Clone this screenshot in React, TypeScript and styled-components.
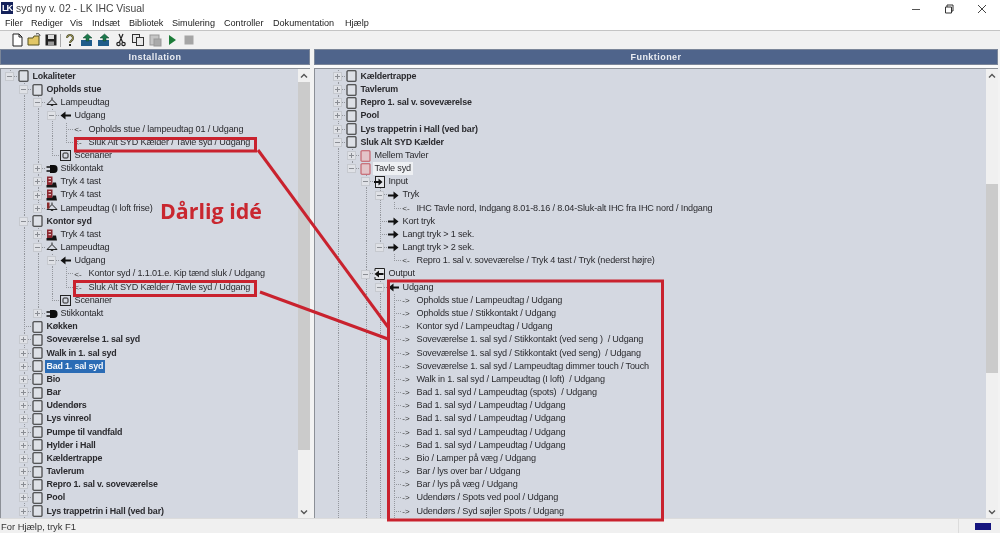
import React from "react";
import styled, { createGlobalStyle } from "styled-components";

const Global = createGlobalStyle`
  html, body { margin: 0; padding: 0; background: #fff; }
  * { box-sizing: border-box; }
`;

const Page = styled.div`
  position: relative;
  width: 1000px;
  height: 533px;
  overflow: hidden;
  display: flex;
  flex-direction: column;
  background: #fff;
  font-family: "Liberation Sans", "Noto Sans", sans-serif;
  color: #2a2a2e;
  filter: blur(0.3px);
`;

const TitleBar = styled.div`
  height: 16px;
  flex: none;
  display: flex;
  align-items: center;
  padding-left: 1px;
  font-size: 10.4px;
  color: #444;
`;
const Logo = styled.div`
  width: 12px;
  height: 12px;
  background: #14215a;
  color: #fff;
  font: bold 9px "Liberation Sans", sans-serif;
  letter-spacing: -1px;
  display: flex;
  align-items: center;
  justify-content: center;
  margin-right: 3px;
`;
const TitleText = styled.div`
  flex: 1;
`;
const WinControls = styled.div`
  display: flex;
  padding-right: 2px;
  margin-top: 1px;
`;
const WinButton = styled.div`
  width: 33px;
  height: 12px;
  display: flex;
  align-items: center;
  justify-content: center;
`;
const MenuBar = styled.div`
  height: 15px;
  flex: none;
  display: flex;
  align-items: center;
  padding-left: 5px;
  font-size: 9.1px;
  color: #222;
  border-bottom: 1px solid #c4c4c4;
`;
const MenuItem = styled.div<{ $w: number }>`
  width: ${(p) => p.$w}px;
`;
const Toolbar = styled.div`
  height: 18px;
  flex: none;
  display: flex;
  align-items: center;
  padding-left: 8px;
  background: #f1f1f1;
`;
const ToolIcon = styled.div`
  width: 17px;
  height: 14px;
  display: flex;
  align-items: center;
  justify-content: center;
`;
const ToolSep = styled.div`
  width: 1px;
  height: 13px;
  margin-left: 1px;
  background: #a8a8a8;
`;
const Panes = styled.div`
  height: 469px;
  flex: none;
  display: flex;
  background: #f3f3f3;
`;
const Pane = styled.div<{ $w: number }>`
  width: ${(p) => p.$w}px;
  display: flex;
  flex-direction: column;
`;
const Splitter = styled.div`
  width: 4px;
`;
const PaneHead = styled.div`
  height: 16px;
  flex: none;
  background: #4f648b;
  border: 1px solid #7b8699;
  color: #e9ecf2;
  font: bold 9px "Liberation Sans", sans-serif;
  letter-spacing: 0.45px;
  display: flex;
  align-items: center;
  justify-content: center;
`;
const PaneGap = styled.div`
  height: 4px;
  flex: none;
  background: #fbfbfb;
  border-bottom: 1px solid #8c9097;
`;
const PaneBody = styled.div`
  height: 449px;
  flex: none;
  display: flex;
  border-left: 1px solid #8c9097;
`;
const Tree = styled.div`
  flex: 1;
  background: #d4d8e1;
  overflow: hidden;
  padding-top: 0.9px;
`;
const Scroll = styled.div`
  width: 12px;
  background: #f0f0f0;
  display: flex;
  flex-direction: column;
  align-items: stretch;
`;
const ScrollBtn = styled.div`
  height: 13px;
  flex: none;
  display: flex;
  align-items: center;
  justify-content: center;
`;
const ScrollTrack = styled.div`
  flex: 1;
  min-height: 0;
`;
const ScrollThumb = styled.div<{ $top: number; $h: number }>`
  margin-top: ${(p) => p.$top}px;
  height: ${(p) => p.$h}px;
  background: #cbcbcb;
`;
const Row = styled.div`
  height: 13.18px;
  display: flex;
  align-items: stretch;
  padding-left: 1.5px;
  font-size: 9.1px;
  white-space: pre;
`;
const LINE = "#94979d";
const dots = `repeating-linear-gradient(to bottom, ${LINE} 0 1px, transparent 1px 2px)`;
const Guide = styled.div<{ $on: boolean }>`
  width: 14px;
  flex: none;
  background: ${(p) => (p.$on ? `${dots} 7px 0 / 1px 100% no-repeat` : "none")};
`;
const Joint = styled.div<{ $down: boolean }>`
  width: 14px;
  flex: none;
  display: flex;
  align-items: center;
  justify-content: center;
  background: ${dots} 7px 0 / 1px ${(p) => (p.$down ? "100%" : "7px")} no-repeat,
    repeating-linear-gradient(to right, ${LINE} 0 1px, transparent 1px 2px) 7px 6px / 7px 1px no-repeat;
`;
const Expander = styled.div`
  width: 9px;
  height: 9px;
  background: #dfe1e6;
  border: 1px solid #c6c9cf;
  display: flex;
  align-items: center;
  justify-content: center;
`;
const IconCell = styled.div`
  width: 14px;
  flex: none;
  display: flex;
  align-items: center;
  justify-content: center;
`;
const Arrow = styled.span`
  font-size: 8px;
  color: #333;
  margin-right: 3px;
`;
const Label = styled.div<{ $bold?: boolean; $sel?: "blue" | "white" }>`
  padding: 0 2px;
  line-height: 13px;
  font-size: ${(p) => (p.$bold ? 8.9 : 9.1)}px;
  letter-spacing: ${(p) => (p.$bold ? -0.17 : -0.16)}px;
  font-weight: ${(p) => (p.$bold ? 700 : 400)};
  background: ${(p) => (p.$sel === "blue" ? "#2b6cb5" : p.$sel === "white" ? "#eef0f3" : "transparent")};
  color: ${(p) => (p.$sel === "blue" ? "#f4f7fb" : "inherit")};
`;
const StatusBar = styled.div`
  flex: 1;
  display: flex;
  align-items: center;
  background: #f0f0f0;
  border-top: 1px solid #dcdcdc;
  padding-left: 1px;
  font-size: 9.4px;
  color: #333;
`;
const StatusText = styled.div`
  flex: 1;
`;
const StatusCell = styled.div`
  width: 42px;
  height: 100%;
  border-left: 1px solid #dcdcdc;
  display: flex;
  align-items: center;
  padding-left: 16px;
`;
const StatusLed = styled.div`
  width: 16px;
  height: 7px;
  background: #14147e;
`;
const Annotation = styled.svg`
  position: absolute;
  inset: 0;
  pointer-events: none;
`;
const Callout = styled.div`
  position: absolute;
  left: 160px;
  top: 196px;
  font: bold 21.4px "Open Sans", "Noto Sans", sans-serif;
  color: #c9272f;
  white-space: pre;
`;

type Kind = "room" | "red" | "lamp" | "loft" | "in" | "out" | "arrowR" | "arrowL" | "boxIn" | "boxOut" | "scene" | "plug" | "push" | "back" | "fwd";
type N = { l: number; k: Kind; t: string; b?: boolean; x?: "+" | "-"; s?: "blue" | "white" };

const Icon = ({ k }: { k: Kind }) => {
  switch (k) {
    case "back":
      return <Arrow>{"<-"}</Arrow>;
    case "fwd":
      return <Arrow>{"->"}</Arrow>;
    case "room":
    case "red":
      return (
        <svg width="11" height="12" viewBox="0 0 11 12">
          <rect x="1" y="0.8" width="9" height="10.4" rx="0.8" fill={k === "red" ? "#e3c4c8" : "#dde0e6"} stroke={k === "red" ? "#c2555f" : "#2b2b2b"} strokeWidth="1.05" />
        </svg>
      );
    case "lamp":
    case "loft":
      return (
        <svg width="12" height="12" viewBox="0 0 12 12">
          <path d="M1 7.5 L6 2.5 L11 7.5 Z" fill="none" stroke="#222" strokeWidth="1" />
          <path d="M4.5 8 a1.6 1.6 0 0 0 3 0" fill="#222" />
          <path d="M6 0.5 V2.5" stroke="#222" />
          {k === "loft" && <rect x="1" y="0.5" width="2.5" height="6" fill="#8c2b2b" />}
        </svg>
      );
    case "in":
    case "arrowR":
      return (
        <svg width="11" height="9" viewBox="0 0 11 9">
          <path d="M0 3.5 H5.5 V0.5 L10.5 4.5 L5.5 8.5 V5.5 H0 Z" fill="#111" />
        </svg>
      );
    case "out":
    case "arrowL":
      return (
        <svg width="11" height="9" viewBox="0 0 11 9">
          <path d="M11 3.5 H5.5 V0.5 L0.5 4.5 L5.5 8.5 V5.5 H11 Z" fill="#111" />
        </svg>
      );
    case "boxIn":
      return (
        <svg width="11" height="12" viewBox="0 0 11 12">
          <rect x="1.5" y="0.5" width="9" height="11" fill="#e4e6ea" stroke="#222" />
          <path d="M0 5 H4.5 V2.5 L8.5 6 L4.5 9.5 V7 H0 Z" fill="#111" />
        </svg>
      );
    case "boxOut":
      return (
        <svg width="11" height="12" viewBox="0 0 11 12">
          <path d="M1 3 V0.5 H10.5 V11.5 H1 V9" fill="#e4e6ea" stroke="#222" />
          <path d="M9.5 5 H5 V2.5 L0.5 6 L5 9.5 V7 H9.5 Z" fill="#111" />
        </svg>
      );
    case "scene":
      return (
        <svg width="11" height="11" viewBox="0 0 11 11">
          <rect x="0.5" y="0.5" width="10" height="10" fill="#d4d8e1" stroke="#222" />
          <rect x="3" y="3" width="5" height="5" rx="1" fill="none" stroke="#222" />
        </svg>
      );
    case "plug":
      return (
        <svg width="12" height="10" viewBox="0 0 12 10">
          <path d="M4 1 H8 a3.6 4 0 0 1 0 8 H4 Z" fill="#0c0c0c" />
          <path d="M0.5 3 H4.5 M0.5 7 H4.5" stroke="#0c0c0c" strokeWidth="1.3" />
        </svg>
      );
    case "push":
      return (
        <svg width="11" height="12" viewBox="0 0 11 12">
          <rect x="1" y="0.5" width="5.5" height="8.5" fill="#8c2730" />
          <rect x="2.5" y="2" width="2.5" height="1.2" fill="#e4c4c4" />
          <rect x="2.5" y="5" width="2.5" height="1.2" fill="#e4c4c4" />
          <path d="M0.5 9 H6 L7 6.5 H10 L11 11.5 H0.5 Z" fill="#141414" />
        </svg>
      );
  }
};

const left: N[] = [
  { l: 0, k: "room", t: "Lokaliteter", b: true, x: "-" },
  { l: 1, k: "room", t: "Opholds stue", b: true, x: "-" },
  { l: 2, k: "lamp", t: "Lampeudtag", x: "-" },
  { l: 3, k: "arrowL", t: "Udgang", x: "-" },
  { l: 4, k: "back", t: "Opholds stue / lampeudtag 01 / Udgang" },
  { l: 4, k: "back", t: "Sluk Alt SYD Kælder / Tavle syd / Udgang" },
  { l: 3, k: "scene", t: "Scenarier" },
  { l: 2, k: "plug", t: "Stikkontakt", x: "+" },
  { l: 2, k: "push", t: "Tryk 4 tast", x: "+" },
  { l: 2, k: "push", t: "Tryk 4 tast", x: "+" },
  { l: 2, k: "loft", t: "Lampeudtag (I loft frise)", x: "+" },
  { l: 1, k: "room", t: "Kontor syd", b: true, x: "-" },
  { l: 2, k: "push", t: "Tryk 4 tast", x: "+" },
  { l: 2, k: "lamp", t: "Lampeudtag", x: "-" },
  { l: 3, k: "arrowL", t: "Udgang", x: "-" },
  { l: 4, k: "back", t: "Kontor syd / 1.1.01.e. Kip tænd sluk / Udgang" },
  { l: 4, k: "back", t: "Sluk Alt SYD Kælder / Tavle syd / Udgang" },
  { l: 3, k: "scene", t: "Scenarier" },
  { l: 2, k: "plug", t: "Stikkontakt", x: "+" },
  { l: 1, k: "room", t: "Køkken", b: true },
  ...["Soveværelse 1. sal syd", "Walk in 1. sal syd"].map((t): N => ({ l: 1, k: "room", t, b: true, x: "+" })),
  { l: 1, k: "room", t: "Bad 1. sal syd", b: true, x: "+", s: "blue" },
  ...[
    "Bio",
    "Bar",
    "Udendørs",
    "Lys vinreol",
    "Pumpe til vandfald",
    "Hylder i Hall",
    "Kældertrappe",
    "Tavlerum",
    "Repro 1. sal v. soveværelse",
    "Pool",
    "Lys trappetrin i Hall (ved bar)",
  ].map((t): N => ({ l: 1, k: "room", t, b: true, x: "+" })),
];

const right: N[] = [
  ...["Kældertrappe", "Tavlerum", "Repro 1. sal v. soveværelse", "Pool", "Lys trappetrin i Hall (ved bar)"].map(
    (t): N => ({ l: 1, k: "room", t, b: true, x: "+" })
  ),
  { l: 1, k: "room", t: "Sluk Alt SYD Kælder", b: true, x: "-" },
  { l: 2, k: "red", t: "Mellem Tavler", x: "+" },
  { l: 2, k: "red", t: "Tavle syd", x: "-", s: "white" },
  { l: 3, k: "boxIn", t: "Input", x: "-" },
  { l: 4, k: "in", t: "Tryk", x: "-" },
  { l: 5, k: "back", t: "IHC Tavle nord, Indgang 8.01-8.16 / 8.04-Sluk-alt IHC fra IHC nord / Indgang" },
  { l: 4, k: "in", t: "Kort tryk" },
  { l: 4, k: "in", t: "Langt tryk > 1 sek." },
  { l: 4, k: "in", t: "Langt tryk > 2 sek.", x: "-" },
  { l: 5, k: "back", t: "Repro 1. sal v. soveværelse / Tryk 4 tast / Tryk (nederst højre)" },
  { l: 3, k: "boxOut", t: "Output", x: "-" },
  { l: 4, k: "out", t: "Udgang", x: "-" },
  ...[
    "Opholds stue / Lampeudtag / Udgang",
    "Opholds stue / Stikkontakt / Udgang",
    "Kontor syd / Lampeudtag / Udgang",
    "Soveværelse 1. sal syd / Stikkontakt (ved seng )  / Udgang",
    "Soveværelse 1. sal syd / Stikkontakt (ved seng)  / Udgang",
    "Soveværelse 1. sal syd / Lampeudtag dimmer touch / Touch",
    "Walk in 1. sal syd / Lampeudtag (I loft)  / Udgang",
    "Bad 1. sal syd / Lampeudtag (spots)  / Udgang",
    "Bad 1. sal syd / Lampeudtag / Udgang",
    "Bad 1. sal syd / Lampeudtag / Udgang",
    "Bad 1. sal syd / Lampeudtag / Udgang",
    "Bad 1. sal syd / Lampeudtag / Udgang",
    "Bio / Lamper på væg / Udgang",
    "Bar / lys over bar / Udgang",
    "Bar / lys på væg / Udgang",
    "Udendørs / Spots ved pool / Udgang",
    "Udendørs / Syd søjler Spots / Udgang",
  ].map((t): N => ({ l: 5, k: "fwd", t })),
];

// Levels that carry on past the bottom of the visible list.
const hasNext = (list: N[], i: number, k: number, open: number[]) => {
  for (let j = i + 1; j < list.length; j++) {
    if (list[j].l === k) return true;
    if (list[j].l < k) return false;
  }
  return open.includes(k);
};

const Plus = ({ minus }: { minus: boolean }) => (
  <svg width="7" height="7" viewBox="0 0 7 7">
    <path d={minus ? "M1 3.5 H6" : "M1 3.5 H6 M3.5 1 V6"} stroke="#8a8d93" strokeWidth="1" />
  </svg>
);

const TreeList = ({ items, open }: { items: N[]; open: number[] }) => (
  <Tree>
    {items.map((n, i) => (
      <Row key={i}>
        {Array.from({ length: n.l }, (_, k) => (
          <Guide key={k} $on={hasNext(items, i, k, open)} />
        ))}
        <Joint $down={hasNext(items, i, n.l, open)}>{n.x && <Expander><Plus minus={n.x === "-"} /></Expander>}</Joint>
        <IconCell>
          <Icon k={n.k} />
        </IconCell>
        <Label $bold={n.b} $sel={n.s}>
          {n.t}
        </Label>
      </Row>
    ))}
  </Tree>
);

const Chevron = ({ up }: { up: boolean }) => (
  <svg width="8" height="6" viewBox="0 0 8 6">
    <path d={up ? "M1 4.5 L4 1.5 L7 4.5" : "M1 1.5 L4 4.5 L7 1.5"} fill="none" stroke="#555" strokeWidth="1.4" />
  </svg>
);

const ScrollBar = ({ top, h }: { top: number; h: number }) => (
  <Scroll>
    <ScrollBtn>
      <Chevron up />
    </ScrollBtn>
    <ScrollTrack>
      <ScrollThumb $top={top} $h={h} />
    </ScrollTrack>
    <ScrollBtn>
      <Chevron up={false} />
    </ScrollBtn>
  </Scroll>
);

const tools: React.ReactNode[] = [
  <path key="n" d="M3 1 H9 L12 4 V13 H3 Z M9 1 V4 H12" fill="#fff" stroke="#222" />,
  <g key="o">
    <path d="M1 5 H6 L7 3 H12 V12 H1 Z" fill="#e2c766" stroke="#55501f" />
    <path d="M9 1 C11 0 13 1 13 3" fill="none" stroke="#333" />
  </g>,
  <g key="s">
    <rect x="1.5" y="1.5" width="11" height="11" fill="#222" />
    <rect x="4" y="2" width="6" height="4" fill="#ddd" />
    <rect x="4" y="8.5" width="6" height="4" fill="#999" />
  </g>,
  null,
  <g key="h">
    <path d="M4 5 a3 3 0 1 1 4.5 2.6 C7.5 8.2 7 8.6 7 10" fill="none" stroke="#3a3a22" strokeWidth="2" />
    <path d="M4 5 a3 3 0 1 1 4.5 2.6 C7.5 8.2 7 8.6 7 10" fill="none" stroke="#c7c06a" strokeWidth="0.8" />
    <rect x="6" y="11" width="2" height="2" fill="#222" />
  </g>,
  <g key="u1">
    <rect x="1" y="7" width="11" height="6" fill="#1f5c8a" />
    <path d="M6 8 V5 H3 L7.5 1 L12 5 H9 V8 Z" fill="#1c7a4c" stroke="#10402a" strokeWidth="0.5" />
  </g>,
  <g key="u2">
    <rect x="1" y="7" width="11" height="6" fill="#1f5c8a" />
    <path d="M6 8 V5 H3 L7.5 1 L12 5 H9 V8 Z" fill="#1c7a4c" stroke="#10402a" strokeWidth="0.5" />
  </g>,
  <g key="c" fill="none" stroke="#222" strokeWidth="1.2">
    <path d="M5 1 L8.5 9 M9 1 L5.5 9" />
    <circle cx="4.5" cy="11" r="1.7" />
    <circle cx="9.5" cy="11" r="1.7" />
  </g>,
  <g key="p" stroke="#333" fill="#e8e8e8">
    <rect x="1.5" y="1.5" width="7" height="8" />
    <rect x="5.5" y="4.5" width="7" height="8" />
  </g>,
  <g key="v" stroke="#999" fill="#c6c6c6">
    <rect x="2" y="2" width="9" height="10" />
    <rect x="6" y="6" width="7" height="7" fill="#aaa" />
  </g>,
  <path key="r" d="M4 2 L11 7 L4 12 Z" fill="#1c7c38" />,
  <rect key="st" x="2.5" y="2.5" width="9" height="9" fill="#a5a5a5" />,
];

const menus: [string, number][] = [
  ["Filer", 26],
  ["Rediger", 39],
  ["Vis", 22],
  ["Indsæt", 37],
  ["Bibliotek", 43],
  ["Simulering", 52],
  ["Controller", 49],
  ["Dokumentation", 72],
  ["Hjælp", 40],
];

export default function App() {
  return (
    <Page>
      <Global />
      <TitleBar>
        <Logo>LK</Logo>
        <TitleText>syd ny v. 02 - LK IHC Visual</TitleText>
        <WinControls>
          <WinButton>
            <svg width="10" height="10" viewBox="0 0 10 10">
              <path d="M1 5.5 H9" stroke="#555" />
            </svg>
          </WinButton>
          <WinButton>
            <svg width="10" height="10" viewBox="0 0 10 10">
              <path d="M1.5 3 H7.5 V9 H1.5 Z M3 3 V1 H9 V7 H7.5" fill="none" stroke="#333" />
            </svg>
          </WinButton>
          <WinButton>
            <svg width="10" height="10" viewBox="0 0 10 10">
              <path d="M1 1 L9 9 M9 1 L1 9" stroke="#444" />
            </svg>
          </WinButton>
        </WinControls>
      </TitleBar>
      <MenuBar>
        {menus.map(([m, w]) => (
          <MenuItem key={m} $w={w}>
            {m}
          </MenuItem>
        ))}
      </MenuBar>
      <Toolbar>
        {tools.map((t, i) =>
          t === null ? (
            <ToolSep key={i} />
          ) : (
            <ToolIcon key={i}>
              <svg width="14" height="14" viewBox="0 0 14 14">
                {t}
              </svg>
            </ToolIcon>
          )
        )}
      </Toolbar>
      <Panes>
        <Pane $w={310}>
          <PaneHead>Installation</PaneHead>
          <PaneGap />
          <PaneBody>
            <TreeList items={left} open={[1]} />
            <ScrollBar top={0} h={368} />
          </PaneBody>
        </Pane>
        <Splitter />
        <Pane $w={684}>
          <PaneHead>Funktioner</PaneHead>
          <PaneGap />
          <PaneBody>
            <TreeList items={right} open={[1, 3, 4, 5]} />
            <ScrollBar top={102} h={189} />
          </PaneBody>
        </Pane>
      </Panes>
      <StatusBar>
        <StatusText>For Hjælp, tryk F1</StatusText>
        <StatusCell>
          <StatusLed />
        </StatusCell>
      </StatusBar>
      <Annotation width="1000" height="533" viewBox="0 0 1000 533">
        <g fill="none" stroke="#c9222e" strokeWidth="3">
          <rect x="75.5" y="138.5" width="180" height="12.5" />
          <rect x="74.5" y="281.5" width="181" height="14" />
          <rect x="388.5" y="281" width="274" height="239" />
          <path d="M258 150 L388 327" />
          <path d="M260 292 L388 339" />
        </g>
      </Annotation>
      <Callout>Dårlig idé</Callout>
    </Page>
  );
}
